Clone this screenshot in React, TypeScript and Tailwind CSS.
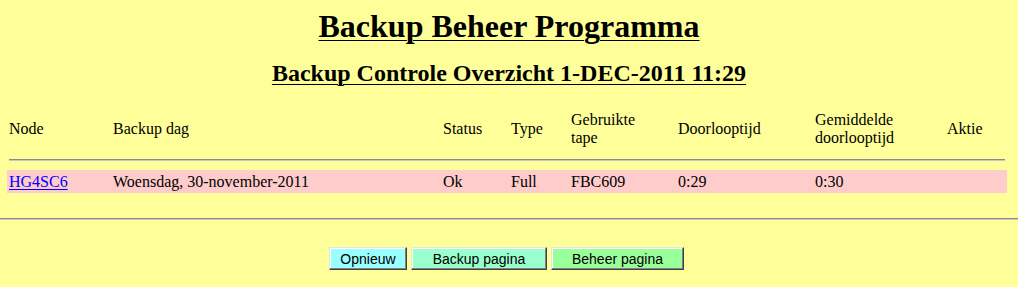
const columns = [
  { label: ["Node"], width: "w-[104px]" },
  { label: ["Backup dag"], width: "w-[330px]" },
  { label: ["Status"], width: "w-[68px]" },
  { label: ["Type"], width: "w-[60px]" },
  { label: ["Gebruikte", "tape"], width: "w-[107px]" },
  { label: ["Doorlooptijd"], width: "w-[137px]" },
  { label: ["Gemiddelde", "doorlooptijd"], width: "w-[132px]" },
  { label: ["Aktie"], width: "w-[62px]" },
];

const row = ["HG4SC6", "Woensdag, 30-november-2011", "Ok", "Full", "FBC609", "0:29", "0:30", ""];

const buttons = [
  { label: "Opnieuw", className: "w-[78px] bg-[#99ffff]" },
  { label: "Backup pagina", className: "w-[136px] bg-[#99ffcc]" },
  { label: "Beheer pagina", className: "w-[133px] bg-[#99ff99]" },
];

export default function App() {
  return (
    <div className="h-[287px] w-full overflow-hidden bg-[#ffff99] text-black [font-family:'Liberation_Serif','Times_New_Roman',serif]">
      <h1 className="pt-[8px] text-center text-[32px] font-bold leading-[36px] underline decoration-1 underline-offset-[3px]">
        Backup Beheer Programma
      </h1>
      <h2 className="mt-[15px] text-center text-[24px] font-bold leading-[28px] underline decoration-1 underline-offset-[3px]">
        Backup Controle Overzicht 1-DEC-2011 11:29
      </h2>

      {/* Table */}
      <div className="mt-[23px] px-[7px] text-[16px] leading-[18px]">
        <div className="flex h-[37px] w-[1000px] items-center">
          {columns.map((c) => (
            <div key={c.label.join(" ")} className={`${c.width} shrink-0 pl-[2px]`}>
              {c.label.map((l) => (
                <div key={l}>{l}</div>
              ))}
            </div>
          ))}
        </div>
        <div className="mt-[12px] ml-[2px] w-[996px] border-t border-b border-t-[#8a8a8a] border-b-[#c8c8c8]" />
        <div className="mt-[9px] flex h-[23px] w-[1000px] items-center bg-[#ffcccc]">
          {columns.map((c, i) => (
            <div key={c.label.join(" ")} className={`${c.width} shrink-0 pl-[2px]`}>
              {i === 0 ? (
                <a href="#" className="text-[#0000ff] underline decoration-1 underline-offset-[2px]">
                  {row[i]}
                </a>
              ) : (
                row[i]
              )}
            </div>
          ))}
        </div>
      </div>

      <div className="mt-[25px] w-full border-t border-b border-t-[#8a8a8a] border-b-[#c8c8c8]" />

      {/* Buttons */}
      <div className="mt-[27px] flex justify-center gap-[4px] pr-[5px]">
        {buttons.map((b) => (
          <button
            key={b.label}
            className={`${b.className} h-[23px] border border-t-[#e4e4e4] border-l-[#e4e4e4] border-r-[#404040] border-b-[#404040] text-[14px] leading-[16px] shadow-[inset_-1px_-1px_0_#808080,inset_1px_1px_0_#ffffff] [font-family:'Liberation_Sans',Arial,sans-serif]`}
          >
            {b.label}
          </button>
        ))}
      </div>
    </div>
  );
}
